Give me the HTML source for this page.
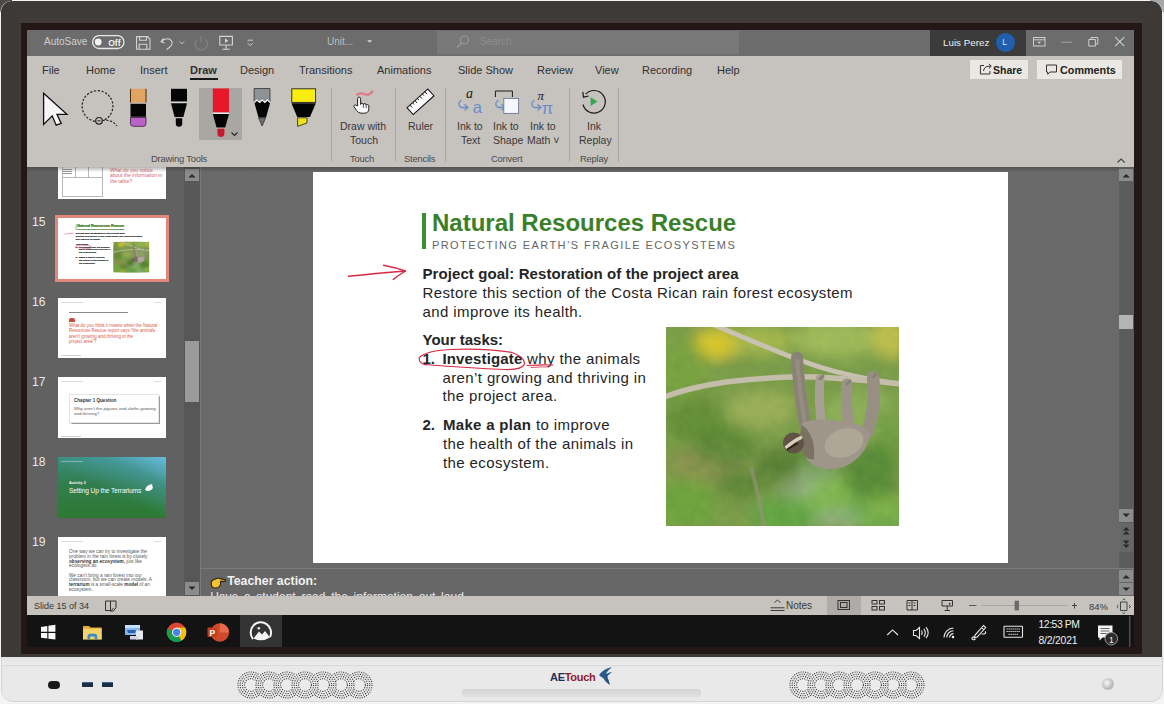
<!DOCTYPE html>
<html><head><meta charset="utf-8">
<style>
*{margin:0;padding:0;box-sizing:border-box}
html,body{width:1164px;height:704px;overflow:hidden;background:#f4f4f4;font-family:"Liberation Sans",sans-serif}
.a{position:absolute}
.t{position:absolute;white-space:nowrap;line-height:1}
.tab{position:absolute;top:65px;font-size:11px;color:#303030;white-space:nowrap;line-height:1}
.rl{position:absolute;font-size:10.5px;color:#383838;white-space:nowrap;line-height:1;text-align:center}
.gl{position:absolute;top:154.3px;font-size:9.4px;letter-spacing:-0.2px;color:#4a4a4a;white-space:nowrap;line-height:1}
.sep{position:absolute;top:88px;width:1px;height:74px;background:#aaa6a2}
.num{position:absolute;left:32px;font-size:12px;color:#e8e8e8;line-height:1}
.sl{position:absolute;left:422.5px;font-size:15px;color:#252525;white-space:nowrap;line-height:1;letter-spacing:0.4px}
.clone .sl{-webkit-text-stroke:1.6px #3a3a3a}.clone .t{-webkit-text-stroke:1.6px #3a8029}
.thumb{position:absolute;left:58px;width:108px;height:61px;background:#fff;overflow:hidden}
</style></head><body>
<!-- outer corners -->
<div class="a" style="left:0;top:0;width:12px;height:12px;background:#4a4a4a"></div>
<div class="a" style="left:1150px;top:0;width:14px;height:12px;background:#a8a8a8"></div>
<!-- bottom frame -->
<div class="a" style="left:1px;top:640px;width:1162px;height:62px;background:#e9e9e9;border-radius:0 0 12px 12px;border:1px solid #d6d6d6"></div>
<!-- bezel -->
<div class="a" style="left:1px;top:1px;width:1161px;height:656px;background:#3d3936;border-radius:11px 11px 0 0;box-shadow:0.5px 0 0 #f0f0f0,-0.5px 0 0 #f0f0f0"></div>
<!-- inner dark -->
<div class="a" style="left:12px;top:7px;width:1140px;height:3px;background:#413a3b;opacity:0.6"></div>
<div class="a" style="left:17px;top:18px;width:1129px;height:5px;background:#413a38;border-radius:3px 3px 0 0"></div>
<div class="a" style="left:21px;top:22.6px;width:1121px;height:631.4px;background:#241817"></div>

<!-- bottom frame details -->
<div class="a" style="left:2px;top:657px;width:1160px;height:9px;background:linear-gradient(#e3e3e3,#ededed)"></div>
<div class="a" style="left:2px;top:665px;width:1160px;height:1px;background:#d8d8d8"></div>
<div class="a" style="left:48px;top:680.8px;width:11.6px;height:7.8px;border-radius:4px;background:#1a1a1a"></div>
<div class="a" style="left:82px;top:681.5px;width:11px;height:5.2px;background:#1a2f44;border-top:1.5px solid #3a6a94"></div>
<div class="a" style="left:102px;top:681.5px;width:11px;height:5.2px;background:#1a2f44;border-top:1.5px solid #3a6a94"></div>
<svg class="a grille" style="left:237px;top:671px" width="138" height="29" viewBox="0 0 138 29"><circle cx="14" cy="14" r="14.0" fill="#ebebeb"/><circle cx="14" cy="14" r="13.0" fill="none" stroke="#383838" stroke-width="1.1" stroke-dasharray="1.1 1.234"/><circle cx="14" cy="14" r="10.8" fill="none" stroke="#383838" stroke-width="1.1" stroke-dasharray="1.1 1.240"/><circle cx="14" cy="14" r="8.6" fill="none" stroke="#383838" stroke-width="1.1" stroke-dasharray="1.1 1.249"/><circle cx="14" cy="14" r="6.4" fill="none" stroke="#383838" stroke-width="1.1" stroke-dasharray="1.1 1.265"/><circle cx="122" cy="14" r="14.0" fill="#ebebeb"/><circle cx="122" cy="14" r="13.0" fill="none" stroke="#383838" stroke-width="1.1" stroke-dasharray="1.1 1.234"/><circle cx="122" cy="14" r="10.8" fill="none" stroke="#383838" stroke-width="1.1" stroke-dasharray="1.1 1.240"/><circle cx="122" cy="14" r="8.6" fill="none" stroke="#383838" stroke-width="1.1" stroke-dasharray="1.1 1.249"/><circle cx="122" cy="14" r="6.4" fill="none" stroke="#383838" stroke-width="1.1" stroke-dasharray="1.1 1.265"/><circle cx="32" cy="14" r="14.0" fill="#ebebeb"/><circle cx="32" cy="14" r="13.0" fill="none" stroke="#383838" stroke-width="1.1" stroke-dasharray="1.1 1.234"/><circle cx="32" cy="14" r="10.8" fill="none" stroke="#383838" stroke-width="1.1" stroke-dasharray="1.1 1.240"/><circle cx="32" cy="14" r="8.6" fill="none" stroke="#383838" stroke-width="1.1" stroke-dasharray="1.1 1.249"/><circle cx="32" cy="14" r="6.4" fill="none" stroke="#383838" stroke-width="1.1" stroke-dasharray="1.1 1.265"/><circle cx="104" cy="14" r="14.0" fill="#ebebeb"/><circle cx="104" cy="14" r="13.0" fill="none" stroke="#383838" stroke-width="1.1" stroke-dasharray="1.1 1.234"/><circle cx="104" cy="14" r="10.8" fill="none" stroke="#383838" stroke-width="1.1" stroke-dasharray="1.1 1.240"/><circle cx="104" cy="14" r="8.6" fill="none" stroke="#383838" stroke-width="1.1" stroke-dasharray="1.1 1.249"/><circle cx="104" cy="14" r="6.4" fill="none" stroke="#383838" stroke-width="1.1" stroke-dasharray="1.1 1.265"/><circle cx="50" cy="14" r="14.0" fill="#ebebeb"/><circle cx="50" cy="14" r="13.0" fill="none" stroke="#383838" stroke-width="1.1" stroke-dasharray="1.1 1.234"/><circle cx="50" cy="14" r="10.8" fill="none" stroke="#383838" stroke-width="1.1" stroke-dasharray="1.1 1.240"/><circle cx="50" cy="14" r="8.6" fill="none" stroke="#383838" stroke-width="1.1" stroke-dasharray="1.1 1.249"/><circle cx="50" cy="14" r="6.4" fill="none" stroke="#383838" stroke-width="1.1" stroke-dasharray="1.1 1.265"/><circle cx="86" cy="14" r="14.0" fill="#ebebeb"/><circle cx="86" cy="14" r="13.0" fill="none" stroke="#383838" stroke-width="1.1" stroke-dasharray="1.1 1.234"/><circle cx="86" cy="14" r="10.8" fill="none" stroke="#383838" stroke-width="1.1" stroke-dasharray="1.1 1.240"/><circle cx="86" cy="14" r="8.6" fill="none" stroke="#383838" stroke-width="1.1" stroke-dasharray="1.1 1.249"/><circle cx="86" cy="14" r="6.4" fill="none" stroke="#383838" stroke-width="1.1" stroke-dasharray="1.1 1.265"/><circle cx="68" cy="14" r="14.0" fill="#ebebeb"/><circle cx="68" cy="14" r="13.0" fill="none" stroke="#383838" stroke-width="1.1" stroke-dasharray="1.1 1.234"/><circle cx="68" cy="14" r="10.8" fill="none" stroke="#383838" stroke-width="1.1" stroke-dasharray="1.1 1.240"/><circle cx="68" cy="14" r="8.6" fill="none" stroke="#383838" stroke-width="1.1" stroke-dasharray="1.1 1.249"/><circle cx="68" cy="14" r="6.4" fill="none" stroke="#383838" stroke-width="1.1" stroke-dasharray="1.1 1.265"/></svg>
<svg class="a grille" style="left:789px;top:671px" width="138" height="29" viewBox="0 0 138 29"><circle cx="14" cy="14" r="14.0" fill="#ebebeb"/><circle cx="14" cy="14" r="13.0" fill="none" stroke="#383838" stroke-width="1.1" stroke-dasharray="1.1 1.234"/><circle cx="14" cy="14" r="10.8" fill="none" stroke="#383838" stroke-width="1.1" stroke-dasharray="1.1 1.240"/><circle cx="14" cy="14" r="8.6" fill="none" stroke="#383838" stroke-width="1.1" stroke-dasharray="1.1 1.249"/><circle cx="14" cy="14" r="6.4" fill="none" stroke="#383838" stroke-width="1.1" stroke-dasharray="1.1 1.265"/><circle cx="122" cy="14" r="14.0" fill="#ebebeb"/><circle cx="122" cy="14" r="13.0" fill="none" stroke="#383838" stroke-width="1.1" stroke-dasharray="1.1 1.234"/><circle cx="122" cy="14" r="10.8" fill="none" stroke="#383838" stroke-width="1.1" stroke-dasharray="1.1 1.240"/><circle cx="122" cy="14" r="8.6" fill="none" stroke="#383838" stroke-width="1.1" stroke-dasharray="1.1 1.249"/><circle cx="122" cy="14" r="6.4" fill="none" stroke="#383838" stroke-width="1.1" stroke-dasharray="1.1 1.265"/><circle cx="32" cy="14" r="14.0" fill="#ebebeb"/><circle cx="32" cy="14" r="13.0" fill="none" stroke="#383838" stroke-width="1.1" stroke-dasharray="1.1 1.234"/><circle cx="32" cy="14" r="10.8" fill="none" stroke="#383838" stroke-width="1.1" stroke-dasharray="1.1 1.240"/><circle cx="32" cy="14" r="8.6" fill="none" stroke="#383838" stroke-width="1.1" stroke-dasharray="1.1 1.249"/><circle cx="32" cy="14" r="6.4" fill="none" stroke="#383838" stroke-width="1.1" stroke-dasharray="1.1 1.265"/><circle cx="104" cy="14" r="14.0" fill="#ebebeb"/><circle cx="104" cy="14" r="13.0" fill="none" stroke="#383838" stroke-width="1.1" stroke-dasharray="1.1 1.234"/><circle cx="104" cy="14" r="10.8" fill="none" stroke="#383838" stroke-width="1.1" stroke-dasharray="1.1 1.240"/><circle cx="104" cy="14" r="8.6" fill="none" stroke="#383838" stroke-width="1.1" stroke-dasharray="1.1 1.249"/><circle cx="104" cy="14" r="6.4" fill="none" stroke="#383838" stroke-width="1.1" stroke-dasharray="1.1 1.265"/><circle cx="50" cy="14" r="14.0" fill="#ebebeb"/><circle cx="50" cy="14" r="13.0" fill="none" stroke="#383838" stroke-width="1.1" stroke-dasharray="1.1 1.234"/><circle cx="50" cy="14" r="10.8" fill="none" stroke="#383838" stroke-width="1.1" stroke-dasharray="1.1 1.240"/><circle cx="50" cy="14" r="8.6" fill="none" stroke="#383838" stroke-width="1.1" stroke-dasharray="1.1 1.249"/><circle cx="50" cy="14" r="6.4" fill="none" stroke="#383838" stroke-width="1.1" stroke-dasharray="1.1 1.265"/><circle cx="86" cy="14" r="14.0" fill="#ebebeb"/><circle cx="86" cy="14" r="13.0" fill="none" stroke="#383838" stroke-width="1.1" stroke-dasharray="1.1 1.234"/><circle cx="86" cy="14" r="10.8" fill="none" stroke="#383838" stroke-width="1.1" stroke-dasharray="1.1 1.240"/><circle cx="86" cy="14" r="8.6" fill="none" stroke="#383838" stroke-width="1.1" stroke-dasharray="1.1 1.249"/><circle cx="86" cy="14" r="6.4" fill="none" stroke="#383838" stroke-width="1.1" stroke-dasharray="1.1 1.265"/><circle cx="68" cy="14" r="14.0" fill="#ebebeb"/><circle cx="68" cy="14" r="13.0" fill="none" stroke="#383838" stroke-width="1.1" stroke-dasharray="1.1 1.234"/><circle cx="68" cy="14" r="10.8" fill="none" stroke="#383838" stroke-width="1.1" stroke-dasharray="1.1 1.240"/><circle cx="68" cy="14" r="8.6" fill="none" stroke="#383838" stroke-width="1.1" stroke-dasharray="1.1 1.249"/><circle cx="68" cy="14" r="6.4" fill="none" stroke="#383838" stroke-width="1.1" stroke-dasharray="1.1 1.265"/></svg>
<div class="t" style="left:550px;top:671.5px;font-size:11px;font-weight:bold;letter-spacing:-0.3px;color:#1f2f60">AE<span style="color:#8c1c2c">Touch</span></div>
<svg class="a" style="left:597px;top:666px" width="18" height="22" viewBox="0 0 18 22"><path d="M2 9 Q6 3 15 1 Q10 5 9 8 Q13 6 15 6 Q11 9 10 11 Q12 15 13 19 Q8 16 6 12 Q4 11 2 9z" fill="#2a5a8c"/><path d="M9 8 Q11 13 12 18" stroke="#1a3a60" stroke-width="0.6" fill="none"/></svg>
<div class="a" style="left:462px;top:689px;width:239px;height:8px;border-radius:3px;background:linear-gradient(#d4d4d4,#e0e0e0)"></div>
<div class="a" style="left:1102px;top:678px;width:12px;height:12px;border-radius:50%;background:radial-gradient(circle at 40% 40%,#fafafa,#b8b8b8 60%,#d8d8d8)"></div>

<!-- SCREEN -->
<div class="a" style="left:27px;top:30px;width:1107px;height:617px;background:#696969"></div>
<!-- title bar -->
<div class="a" style="left:27px;top:30px;width:1107px;height:26px;background:#6b6c6b"></div>
<div class="a" style="left:437px;top:31px;width:302px;height:23px;background:#777877"></div>
<div class="a" style="left:930px;top:30px;width:96px;height:26px;background:#3b3b3b"></div>
<div class="t" style="left:44px;top:37.2px;font-size:10px;color:#cfcfcf">AutoSave</div>
<div class="t" style="left:943px;top:38.3px;font-size:9.8px;color:#eeeeee">Luis Perez</div>
<div class="a" style="left:995.5px;top:32.5px;width:19px;height:19px;border-radius:50%;background:#1f5fae"></div>
<div class="t" style="left:1002.3px;top:38px;font-size:8.5px;color:#dfe8f5">L</div>
<div class="t" style="left:327px;top:37px;font-size:10px;color:#bdbdbd">Unit...</div>
<div class="t" style="left:480px;top:37px;font-size:10px;color:#8d8e8d">Search</div>

<svg class="a" style="left:0;top:0" width="1164" height="60" viewBox="0 0 1164 60">
<g fill="none" stroke="#d4d4d4" stroke-width="1.1">
<rect x="92.6" y="35.6" width="31.4" height="12.9" rx="6.45" stroke="#e8e8e8" stroke-width="1.3"/>
<path d="M136.6 36.6 h11 l2.4 2.4 v10.2 h-13.4 z M139.6 36.6 v3.6 h7 v-3.6 M139.2 49.2 v-5 h7.6 v5" />
<path d="M163.5 38.2 l-2.5 3.6 l3.6 1.2 M161.4 41.7 Q165 38 169 39 Q173.5 41 171.5 45 Q170 47.5 166.5 49.5"/>
<path d="M179.6 41.5 l2.3 2.3 l2.3 -2.3" stroke-width="0.9"/>
<path d="M219.8 36.4 h12.6 v8.6 h-12.6 z M226.1 45 v4 M222.5 49.2 h7.2" />
<path d="M247.4 40.2 h5.6 M247.6 43.2 l2.6 2.4 l2.6 -2.4" stroke-width="0.9"/>

</g>
<path d="M197.2 39.2 A6.2 6.2 0 1 0 205.2 39.2 M201.2 36.2 V42.5" fill="none" stroke="#7f807f" stroke-width="1.4"/>
<path d="M225 38.3 l3.4 2.4 l-3.4 2.4 z" fill="#d4d4d4"/>
<circle cx="98.2" cy="42" r="3.4" fill="#f2f2f2"/>
<path d="M367.2 40.2 h5 l-2.5 2.6 z" fill="#d8d8d8"/>
<text x="108.2" y="45.6" font-family="Liberation Sans" font-size="8.6" font-weight="bold" fill="#f0f0f0">Off</text>
<g fill="none" stroke="#9a9b9a" stroke-width="1.2">
<circle cx="464.5" cy="40" r="4"/>
<path d="M461.5 43 l-4.5 4.5"/>
</g>
<g fill="none" stroke="#cfcfcf" stroke-width="1">
<rect x="1033.5" y="37.5" width="11.5" height="8.5"/>
<path d="M1033.5 39.8 h11.5"/>
<path d="M1061 42.2 h11" stroke="#a5a5a5"/>
<path d="M1088.8 39.5 h6.6 v6.6 h-6.6 z M1091 39.5 v-2 h6.8 v6.6 h-2.4"/>
<path d="M1115.2 37.2 l9 9 M1124.2 37.2 l-9 9" stroke-width="1.1"/>
</g>
<path d="M1037.2 41.8 h4 l-2 2 z" fill="#cfcfcf"/>
</svg>

<!-- ribbon -->
<div class="a" style="left:27px;top:56px;width:1107px;height:111px;background:#c6c2be"></div>
<div class="tab" style="left:42px">File</div>
<div class="tab" style="left:86px">Home</div>
<div class="tab" style="left:140px">Insert</div>
<div class="tab" style="left:190px;font-weight:bold">Draw</div>
<div class="a" style="left:190px;top:78px;width:28px;height:2px;background:#1a1a1a"></div>
<div class="tab" style="left:240px">Design</div>
<div class="tab" style="left:299px">Transitions</div>
<div class="tab" style="left:377px">Animations</div>
<div class="tab" style="left:458px">Slide Show</div>
<div class="tab" style="left:537px">Review</div>
<div class="tab" style="left:595px">View</div>
<div class="tab" style="left:642px">Recording</div>
<div class="tab" style="left:717px">Help</div>

<div class="a" style="left:970px;top:60px;width:58px;height:19px;background:#ebe8e4"></div>
<div class="t" style="left:993px;top:65px;font-size:10.5px;color:#222;font-weight:bold">Share</div>
<div class="a" style="left:1037px;top:60px;width:85px;height:19px;background:#ebe8e4"></div>
<div class="t" style="left:1060px;top:65px;font-size:10.8px;color:#222;font-weight:bold">Comments</div>

<svg class="a" style="left:960px;top:56px" width="180" height="115" viewBox="960 56 180 115">
<g fill="none" stroke="#333" stroke-width="1">
<path d="M984 65.5 h-3.6 v8.5 h9.5 v-3"/>
<path d="M983.5 71 q0.5 -4.5 5.5 -4.8 h1.8 M988.8 63.8 l2.5 2.4 l-2.5 2.4"/>
<path d="M1046.5 65 h10 v7 h-6.5 l-2.3 2.3 v-2.3 h-1.2 z"/>
<path d="M1117.5 162.5 l3.6 -3.4 l3.6 3.4" stroke="#444" stroke-width="1.1"/>
</g>
</svg>
<div class="sep" style="left:331px"></div>
<div class="sep" style="left:395px"></div>
<div class="sep" style="left:445px"></div>
<div class="sep" style="left:569px"></div>
<div class="sep" style="left:618px"></div>
<div class="gl" style="left:151px">Drawing Tools</div>
<div class="gl" style="left:350px">Touch</div>
<div class="gl" style="left:404px">Stencils</div>
<div class="gl" style="left:491px">Convert</div>
<div class="gl" style="left:580px">Replay</div>
<div class="rl" style="left:340px;top:121px">Draw with</div>
<div class="rl" style="left:350px;top:135px">Touch</div>
<div class="rl" style="left:408px;top:121px">Ruler</div>
<div class="rl" style="left:457px;top:121px">Ink to</div>
<div class="rl" style="left:461px;top:135px">Text</div>
<div class="rl" style="left:493px;top:121px">Ink to</div>
<div class="rl" style="left:493px;top:135px">Shape</div>
<div class="rl" style="left:530px;top:121px">Ink to</div>
<div class="rl" style="left:527px;top:135px">Math ˅</div>
<div class="rl" style="left:587px;top:121px">Ink</div>
<div class="rl" style="left:579px;top:135px">Replay</div>
<div class="a" style="left:199px;top:88px;width:43px;height:52px;background:#a9a7a4"></div>

<svg class="a" style="left:0;top:0" width="1164" height="170" viewBox="0 0 1164 170">
<!-- arrow -->
<path d="M43.6 93.3 L43.6 124.5 L52.2 115.8 L56.2 125.2 L61.2 123.4 L57 114.3 L66.9 114.3 Z" fill="#f6f6f6" stroke="#111" stroke-width="1.3" stroke-linejoin="miter"/>
<!-- lasso -->
<g fill="none" stroke="#222" stroke-width="1.2">
<path d="M95 121.3 A15.4 15.4 0 1 1 103 120.5" stroke-dasharray="2.2 1.6"/>
<circle cx="99" cy="120.8" r="3.3"/>
<path d="M97.5 120.8 h3" stroke-width="1"/>
<path d="M102.5 120.5 Q112 119 117 126" stroke-dasharray="2.2 1.6"/>
</g>
<!-- eraser -->
<rect x="130.5" y="88.8" width="15.5" height="13.8" fill="#e0a560"/>
<path d="M130.5 88.8 v13.8 M146 88.8 v13.8" stroke="#4a2a10" stroke-width="1"/>
<rect x="130.5" y="103.8" width="15.5" height="13" fill="#050505"/>
<path d="M130.5 117.5 h15.5 v6 a2.8 2.8 0 0 1 -2.8 2.8 h-9.9 a2.8 2.8 0 0 1 -2.8 -2.8 z" fill="#bb62c8" stroke="#3a1a40" stroke-width="0.8"/>
<!-- black pen -->
<rect x="171" y="88.8" width="16" height="12.8" fill="#050505"/>
<rect x="171" y="101.7" width="16" height="1.4" fill="#d8d8d8"/>
<path d="M171 103.2 h16 l-3.6 13.8 h-8.8 z" fill="#050505"/>
<path d="M175.8 118.2 h6.4 v5.6 a3.2 3 0 0 1 -6.4 0 z" fill="#050505"/>
<!-- red pen selected -->
<rect x="212.8" y="88.5" width="16.2" height="24" fill="#e8182a"/>
<rect x="212.8" y="112.6" width="16.2" height="1.3" fill="#f4f4f4"/>
<rect x="217" y="127.7" width="7.8" height="0.9" fill="#e8e8e8"/>
<path d="M212.8 114 h16.2 l-3.8 13.6 h-8.6 z" fill="#050505"/>
<path d="M217.4 128.6 h7 v4.8 a3.5 3.4 0 0 1 -7 0 z" fill="#c8182e"/>
<path d="M231.5 132.5 l3 3 l3 -3" fill="none" stroke="#222" stroke-width="1.1"/>
<!-- pencil -->
<path d="M254.1 88.5 h15.9 v13.4 l-2.6 -2.4 l-2.6 2.4 l-2.6 -2.4 l-2.6 2.4 l-2.6 -2.4 l-2.9 2.4 z" fill="#8c9296" stroke="#222" stroke-width="0.7"/>
<path d="M254.5 103.2 l2.6 -2.4 l2.6 2.4 l2.6 -2.4 l2.6 2.4 l2.6 -2.4 l2.5 2.4 l-4 14.2 h-7.5 z" fill="#050505"/>
<path d="M258.5 117.8 h7.2 l-3.6 8.2 z" fill="#6c7074" stroke="#111" stroke-width="0.6"/>
<path d="M254.3 102.2 l2.6 -2.4 l2.6 2.4 l2.6 -2.4 l2.6 2.4 l2.6 -2.4 l2.7 2.4" fill="none" stroke="#f6f6f6" stroke-width="1.1"/>
<!-- highlighter -->
<rect x="291.8" y="88.8" width="23.8" height="13.6" fill="#f8ec10" stroke="#222" stroke-width="0.9"/>
<path d="M291.5 103.2 h24.3 l-5.8 13.8 h-12.8 z" fill="#050505"/>
<path d="M297.6 117.8 h9.4 v5.2 l-9.4 3.4 z" fill="#f0e21a" stroke="#222" stroke-width="0.8"/>
<!-- hand -->
<path d="M357 94.8 Q361 92.5 364.5 94.2 Q369 96 372.5 91.5" fill="none" stroke="#e07a88" stroke-width="2.2" stroke-linecap="round"/>
<path d="M357.6 106 V98.6 a1.5 1.5 0 0 1 3 0 V104.5 a1.4 1.4 0 0 1 2.8 0.3 a1.4 1.4 0 0 1 2.8 0.4 a1.4 1.4 0 0 1 2.6 0.6 V109 q0 4 -4.5 4.2 h-3.3 q-2.6 0 -4.3 -2.6 l-2.6 -3.8 a1.3 1.3 0 0 1 2 -1.6 z" fill="#fafafa" stroke="#222" stroke-width="1"/>
<path d="M363.4 104.8 v3 M366.2 105.2 v3" stroke="#222" stroke-width="0.8"/>
<!-- ruler -->
<g transform="translate(420.5 101.8) rotate(-42)">
<rect x="-14" y="-4.6" width="28" height="9.2" fill="#fafafa" stroke="#1a1a1a" stroke-width="1.1"/>
<path d="M-10 -4.6 v3.2 M-6.6 -4.6 v2.2 M-3.3 -4.6 v3.2 M0 -4.6 v2.2 M3.3 -4.6 v3.2 M6.6 -4.6 v2.2 M10 -4.6 v3.2" stroke="#1a1a1a" stroke-width="0.9"/>
</g>
<!-- ink to text -->
<text x="466" y="98" font-family="Liberation Serif" font-style="italic" font-size="14" fill="#1a1a1a">a</text>
<g fill="none" stroke="#6a8cc8" stroke-width="1.3" stroke-linecap="round">
<path d="M461 100.5 Q456.5 104 461 107.5 L468 107.5 M465 104.8 L468 107.5 L465 110"/>
<path d="M498 100.5 Q493.5 104 498 107.5 L505 107.5 M502 104.8 L505 107.5 L502 110"/>
<path d="M534 100.5 Q529.5 104 534 107.5 L541 107.5 M538 104.8 L541 107.5 L538 110"/>
</g>
<text x="472.8" y="113" font-family="Liberation Sans" font-size="16.5" fill="#6a8cc8">a</text>
<!-- ink to shape -->
<path d="M495.4 97 V91 H512.4 V97" fill="none" stroke="#1a1a1a" stroke-width="1"/>
<rect x="503.8" y="98.4" width="14.8" height="15" fill="#f4f7fc" stroke="#6b7a96" stroke-width="0.9"/>
<!-- ink to math -->
<text x="537.5" y="99.5" font-family="Liberation Serif" font-style="italic" font-size="13" fill="#1a1a1a">&#960;</text>
<text x="541.5" y="113.5" font-family="Liberation Sans" font-size="17" fill="#6a8cc8">&#960;</text>
<!-- replay -->
<path d="M585.6 94.2 A11.3 11.3 0 1 1 583 104.5" fill="none" stroke="#1a1a1a" stroke-width="1.2"/>
<path d="M582.8 91.8 L583.5 97.2 L588.6 96" fill="none" stroke="#1a1a1a" stroke-width="1.2"/>
<path d="M590.6 97.2 L597.4 101.6 L590.6 106 Z" fill="#2fa84e"/>
</svg>

<!-- left panel -->
<div class="a" style="left:27px;top:167px;width:157px;height:429px;background:#616161"></div>
<div class="a" style="left:184px;top:167px;width:16px;height:429px;background:#575757"></div>
<div class="a" style="left:185px;top:169px;width:14px;height:12px;background:#8c8c8c"></div>
<div class="a" style="left:185px;top:341px;width:14px;height:61px;background:#9a9a9a"></div>
<div class="a" style="left:185px;top:582px;width:14px;height:13px;background:#8c8c8c"></div>
<div class="a" style="left:200px;top:167px;width:1px;height:429px;background:#7a7a7a"></div>

<div class="num" style="top:216px">15</div>
<div class="a" style="left:55px;top:215px;width:114px;height:67px;border:3px solid #e0867a;background:#fff"></div>
<div class="num" style="top:296px">16</div>
<div class="num" style="top:376px">17</div>
<div class="num" style="top:456px">18</div>
<div class="num" style="top:536px">19</div>
<!-- thumbnails -->
<div class="thumb" style="top:167px;height:32px">
  <div class="a" style="left:3.5px;top:0;width:41px;height:30px;border:0.5px solid #b8b8b8;border-top:none"></div>
  <div class="a" style="left:3.5px;top:10px;width:41px;height:0.5px;background:#b8b8b8"></div>
  <div class="a" style="left:16.5px;top:0;width:0.5px;height:10px;background:#b8b8b8"></div>
  <div class="a" style="left:29.5px;top:0;width:0.5px;height:10px;background:#b8b8b8"></div>
  <div class="a" style="left:5px;top:2px;width:9px;height:5px;background:repeating-linear-gradient(#999 0 0.6px,transparent 0.6px 2px)"></div>
  <div class="t" style="left:52px;top:1px;font-size:5px;line-height:5.3px;color:#e06474">What do you notice<br>about the information in<br>the table?</div>
</div>
<div class="a" style="left:59px;top:218px;width:107px;height:61px;overflow:hidden;background:#fff">
  <div class="a clone" style="left:0;top:0;width:1164px;height:704px;transform-origin:0 0;transform:scale(0.15396) translate(-313px,-172px)">
  <!-- slide content -->
<div class="a" style="left:422px;top:213px;width:4px;height:36px;background:#3e8f2f"></div>
<div class="t" style="left:432px;top:211px;font-size:24px;font-weight:bold;color:#3a8029">Natural Resources Rescue</div>
<div class="t" style="left:432px;top:239.5px;font-size:11px;letter-spacing:1.42px;color:#656565">PROTECTING EARTH&#8217;S FRAGILE ECOSYSTEMS</div>
<div class="sl" style="top:266.3px;font-weight:bold;letter-spacing:0.08px">Project goal: Restoration of the project area</div>
<div class="sl" style="top:285.3px">Restore this section of the Costa Rican rain forest ecosystem</div>
<div class="sl" style="top:304.3px">and improve its health.</div>
<div class="sl" style="top:332.3px;font-weight:bold;letter-spacing:0">Your tasks:</div>
<div class="sl" style="top:351px;letter-spacing:0"><b>1.</b></div>
<div class="sl" style="left:442.4px;top:351px"><b style="letter-spacing:0.15px">Investigate</b> why the animals</div>
<div class="sl" style="left:442.4px;top:369.7px">aren&#8217;t growing and thriving in</div>
<div class="sl" style="left:442.4px;top:388.2px">the project area.</div>
<div class="sl" style="top:417px;letter-spacing:0"><b>2.</b></div>
<div class="sl" style="left:443px;top:417px"><b style="letter-spacing:0.3px">Make a plan</b> to improve</div>
<div class="sl" style="left:443px;top:436px">the health of the animals in</div>
<div class="sl" style="left:443px;top:455.3px">the ecosystem.</div>
<svg class="a"  style="left:666px;top:327px" width="233" height="199" viewBox="0 0 233 199">
<defs>
<filter id="bl_t" x="-50%" y="-50%" width="200%" height="200%"><feGaussianBlur stdDeviation="7"/></filter>
<filter id="bl2_t" x="-20%" y="-20%" width="140%" height="140%"><feGaussianBlur stdDeviation="0.7"/></filter>
<clipPath id="pc_t"><rect width="233" height="199"/></clipPath>
</defs>
<g clip-path="url(#pc_t)">
<rect width="233" height="199" fill="#7a9a4a"/>
<g filter="url(#bl_t)">
<ellipse cx="116" cy="100" rx="140" ry="120" fill="#7c9a48" opacity="1"/>
<ellipse cx="50" cy="17" rx="22" ry="14" fill="#d6c228" opacity="0.9"/>
<ellipse cx="15" cy="40" rx="25" ry="30" fill="#6f9a3c" opacity="0.8"/>
<ellipse cx="95" cy="12" rx="30" ry="12" fill="#a8b84a" opacity="0.8"/>
<ellipse cx="180" cy="15" rx="40" ry="18" fill="#9ab858" opacity="0.8"/>
<ellipse cx="225" cy="12" rx="15" ry="20" fill="#c4c048" opacity="0.7"/>
<ellipse cx="30" cy="90" rx="30" ry="25" fill="#5f8a34" opacity="0.8"/>
<ellipse cx="90" cy="80" rx="35" ry="18" fill="#9aae58" opacity="0.7"/>
<ellipse cx="190" cy="85" rx="40" ry="25" fill="#88aa58" opacity="0.7"/>
<ellipse cx="220" cy="100" rx="20" ry="30" fill="#6a9840" opacity="0.7"/>
<ellipse cx="40" cy="140" rx="40" ry="20" fill="#8a8c50" opacity="0.6"/>
<ellipse cx="20" cy="175" rx="30" ry="25" fill="#74a83c" opacity="0.8"/>
<ellipse cx="70" cy="160" rx="25" ry="15" fill="#4f7a30" opacity="0.6"/>
<ellipse cx="110" cy="135" rx="25" ry="20" fill="#3f6a28" opacity="0.6"/>
<ellipse cx="120" cy="185" rx="35" ry="18" fill="#5aa040" opacity="0.7"/>
<ellipse cx="160" cy="165" rx="30" ry="18" fill="#7ab850" opacity="0.7"/>
<ellipse cx="200" cy="150" rx="30" ry="30" fill="#3f7a2c" opacity="0.6"/>
<ellipse cx="210" cy="185" rx="35" ry="18" fill="#6aa84c" opacity="0.7"/>
<ellipse cx="170" cy="190" rx="25" ry="10" fill="#9ab0a0" opacity="0.5"/>
<ellipse cx="130" cy="160" rx="18" ry="10" fill="#98a8a8" opacity="0.45"/>
<ellipse cx="60" cy="190" rx="20" ry="8" fill="#b8c040" opacity="0.6"/>
<ellipse cx="215" cy="178" rx="15" ry="12" fill="#c8c830" opacity="0.5"/>
<ellipse cx="150" cy="145" rx="20" ry="10" fill="#8cb0a0" opacity="0.4"/>
</g>
<path d="M85 140 Q92 165 98 199" stroke="#9a9480" stroke-width="4" fill="none" opacity="0.55" filter="url(#bl2_t)"/>
<g filter="url(#bl2_t)">
<path d="M46 -3 Q90 16 128 31 Q160 43 180 47 Q205 53 235 57" stroke="#c9c2b2" stroke-width="4.8" fill="none"/>
<path d="M-2 70 Q25 60 60 55 Q110 49 150 50 Q200 53 235 57" stroke="#c4bdaa" stroke-width="5.5" fill="none"/>
<path d="M131 31 Q134 65 138 98" stroke="#8d857a" stroke-width="11.5" fill="none" stroke-linecap="round"/>
<path d="M154 52 Q152 75 155 100" stroke="#a49c8e" stroke-width="9" fill="none" stroke-linecap="round"/>
<path d="M181 57 Q180 80 184 100" stroke="#9a9284" stroke-width="11" fill="none" stroke-linecap="round"/>
<path d="M207 50 Q210 78 202 104" stroke="#958d80" stroke-width="12" fill="none" stroke-linecap="round"/>
<ellipse cx="170" cy="117" rx="36" ry="23" fill="#9c9486" transform="rotate(-18 170 117)"/>
<ellipse cx="178" cy="114" rx="22" ry="15" fill="#b0a898" transform="rotate(-18 178 114)"/>
<ellipse cx="146" cy="113" rx="12" ry="19" fill="#7a7062"/>
<circle cx="127.5" cy="116" r="10.5" fill="#5e5244"/>
<path d="M119.5 121 Q127 114 136 110" stroke="#d8d0bc" stroke-width="3.2" fill="none"/>
<path d="M121 122.5 Q127 119 132 116" stroke="#2a2018" stroke-width="1.6" fill="none"/>
</g>
</g>
</svg>


            <svg class="a" style="left:0;top:0" width="1164" height="704" viewBox="0 0 1164 704"><g fill="none" stroke="#d42a45" stroke-width="3"><path d="M348.5 276.3 Q375 273.5 405.5 271"/><path d="M425 364.5 Q470 368 505 369.5 Q522 370 524.5 364 Q525 357 512 352.5 Q485 348 450 349.5 Q425 351 419.5 357.5 Q418 363 426 365"/></g></svg>
  </div>
</div>
<div class="thumb" style="top:298px;height:60px">
  <div class="a" style="left:3px;top:3.5px;width:22px;height:0.7px;background:#dcdcdc"></div>
  <div class="a" style="left:96px;top:3.5px;width:7px;height:0.7px;background:#dcdcdc"></div>
  <div class="a" style="left:11px;top:13.5px;width:59px;height:1.2px;background:#8a8a8a"></div>
  <div class="a" style="left:11px;top:19.5px;width:6px;height:4px;background:#c84a3a;border-radius:2px 2px 0 0"></div>
  <div class="t" style="left:11px;top:25px;font-size:4.45px;line-height:5.4px;color:#de5a48">What do you think it means when the Natural<br>Resources Rescue report says "the animals<br>aren't growing and thriving in the<br>project area"?</div>
  <div class="a" style="left:3px;top:57px;width:20px;height:0.6px;background:#d0d0d0"></div>
</div>
<div class="thumb" style="top:377px">
  <div class="a" style="left:3px;top:3.5px;width:22px;height:0.7px;background:#dcdcdc"></div>
  <div class="a" style="left:96px;top:3.5px;width:7px;height:0.7px;background:#dcdcdc"></div>
  <div class="a" style="left:11px;top:17px;width:90px;height:29px;background:#fff;box-shadow:0.6px 0.8px 1px #9a9a9a;border:0.5px solid #e4e4e4"></div>
  <div class="t" style="left:16px;top:22px;font-size:4.6px;font-weight:bold;color:#333">Chapter 1 Question</div>
  <div class="t" style="left:16px;top:29px;font-size:4.4px;line-height:5px;color:#555">Why aren't the jaguars and sloths growing<br>and thriving?</div>
  <div class="a" style="left:3px;top:59px;width:20px;height:0.6px;background:#d0d0d0"></div>
</div>
<div class="thumb" style="top:457px;height:61px;background:linear-gradient(180deg,#3a8c78 0%,#327d4e 45%,#2c7a30 100%)">
  <div class="a" style="left:0;top:0;width:108px;height:61px;background:linear-gradient(205deg,rgba(105,190,225,0.95) 0%,rgba(80,165,190,0.5) 25%,rgba(60,140,120,0) 55%)"></div>
  <div class="a" style="left:3px;top:3.5px;width:22px;height:0.7px;background:rgba(255,255,255,0.35)"></div>
  <div class="t" style="left:11px;top:25px;font-size:3.8px;font-weight:bold;color:#f4f4f4">Activity 2</div>
  <div class="t" style="left:11px;top:30.5px;font-size:6.6px;color:#fafafa;letter-spacing:-0.1px">Setting Up the Terrariums</div>
  <svg class="a" style="left:86px;top:26px" width="10" height="10" viewBox="0 0 10 10"><path d="M1 7 Q2 3 5 2 L8 1 Q9 2 8 3 L9 4 Q9 6 7 7 Q4 9 1 7z" fill="#f8f8f8"/></svg>
</div>
<div class="thumb" style="top:537px;height:59px">
  <div class="a" style="left:3px;top:3.5px;width:22px;height:0.7px;background:#dcdcdc"></div>
  <div class="a" style="left:96px;top:3.5px;width:7px;height:0.7px;background:#dcdcdc"></div>
  <div class="t" style="left:11px;top:13px;font-size:4.7px;line-height:4.75px;color:#555">One way we can try to investigate the<br>problem in the rain forest is by closely<br><b style="color:#333">observing an ecosystem,</b> just like<br>ecologists do.</div>
  <div class="t" style="left:11px;top:36.5px;font-size:4.7px;line-height:4.75px;color:#555">We can't bring a rain forest into our<br>classroom, but we can create models. A<br><b style="color:#333">terrarium</b> is a small-scale <b style="color:#333">model</b> of an<br>ecosystem.</div>
</div>
<!-- editor -->
<div class="a" style="left:27px;top:167px;width:1107px;height:5px;background:linear-gradient(rgba(40,40,40,0.35),rgba(40,40,40,0))"></div>
<div class="a" style="left:313px;top:172px;width:695px;height:391px;background:#fff"></div>
<!-- slide content -->
<div class="a" style="left:422px;top:213px;width:4px;height:36px;background:#3e8f2f"></div>
<div class="t" style="left:432px;top:211px;font-size:24px;font-weight:bold;color:#3a8029">Natural Resources Rescue</div>
<div class="t" style="left:432px;top:239.5px;font-size:11px;letter-spacing:1.42px;color:#656565">PROTECTING EARTH&#8217;S FRAGILE ECOSYSTEMS</div>
<div class="sl" style="top:266.3px;font-weight:bold;letter-spacing:0.08px">Project goal: Restoration of the project area</div>
<div class="sl" style="top:285.3px">Restore this section of the Costa Rican rain forest ecosystem</div>
<div class="sl" style="top:304.3px">and improve its health.</div>
<div class="sl" style="top:332.3px;font-weight:bold;letter-spacing:0">Your tasks:</div>
<div class="sl" style="top:351px;letter-spacing:0"><b>1.</b></div>
<div class="sl" style="left:442.4px;top:351px"><b style="letter-spacing:0.15px">Investigate</b> why the animals</div>
<div class="sl" style="left:442.4px;top:369.7px">aren&#8217;t growing and thriving in</div>
<div class="sl" style="left:442.4px;top:388.2px">the project area.</div>
<div class="sl" style="top:417px;letter-spacing:0"><b>2.</b></div>
<div class="sl" style="left:443px;top:417px"><b style="letter-spacing:0.3px">Make a plan</b> to improve</div>
<div class="sl" style="left:443px;top:436px">the health of the animals in</div>
<div class="sl" style="left:443px;top:455.3px">the ecosystem.</div>
<svg class="a" id="photo" style="left:666px;top:327px" width="233" height="199" viewBox="0 0 233 199">
<defs>
<filter id="bl" x="-50%" y="-50%" width="200%" height="200%"><feGaussianBlur stdDeviation="7"/></filter>
<filter id="bl2" x="-20%" y="-20%" width="140%" height="140%"><feGaussianBlur stdDeviation="0.7"/></filter>
<clipPath id="pc"><rect width="233" height="199"/></clipPath>
<filter id="nz" x="0" y="0" width="100%" height="100%"><feTurbulence type="fractalNoise" baseFrequency="0.09" numOctaves="2" seed="3"/><feColorMatrix type="matrix" values="0 0 0 0 0.5  0 0 0 0 0.6  0 0 0 0 0.3  0 0 0 1.6 -0.55"/></filter>
</defs>
<g clip-path="url(#pc)">
<rect width="233" height="199" fill="#7a9a4a"/>
<g filter="url(#bl)">
<ellipse cx="116" cy="100" rx="140" ry="120" fill="#789a48" opacity="1"/>
<ellipse cx="50" cy="17" rx="24" ry="15" fill="#dcc62a" opacity="0.95"/>
<ellipse cx="15" cy="40" rx="25" ry="30" fill="#76a040" opacity="0.8"/>
<ellipse cx="95" cy="14" rx="30" ry="14" fill="#aabb4c" opacity="0.85"/>
<ellipse cx="170" cy="12" rx="45" ry="18" fill="#a2bc5c" opacity="0.85"/>
<ellipse cx="225" cy="10" rx="18" ry="22" fill="#cfc54a" opacity="0.75"/>
<ellipse cx="30" cy="95" rx="30" ry="25" fill="#5e8834" opacity="0.8"/>
<ellipse cx="95" cy="82" rx="35" ry="18" fill="#a4b45c" opacity="0.7"/>
<ellipse cx="195" cy="88" rx="40" ry="25" fill="#90b05c" opacity="0.75"/>
<ellipse cx="222" cy="110" rx="18" ry="30" fill="#6a9840" opacity="0.7"/>
<ellipse cx="40" cy="138" rx="40" ry="18" fill="#8e8c52" opacity="0.65"/>
<ellipse cx="20" cy="178" rx="30" ry="25" fill="#6aa23c" opacity="0.85"/>
<ellipse cx="60" cy="120" rx="30" ry="20" fill="#4f7e30" opacity="0.6"/>
<ellipse cx="150" cy="125" rx="30" ry="15" fill="#5a8a38" opacity="0.6"/>
<ellipse cx="75" cy="158" rx="25" ry="15" fill="#4f7a30" opacity="0.6"/>
<ellipse cx="112" cy="138" rx="22" ry="18" fill="#3f6a28" opacity="0.55"/>
<ellipse cx="120" cy="188" rx="35" ry="18" fill="#5aa440" opacity="0.75"/>
<ellipse cx="162" cy="168" rx="30" ry="18" fill="#80bc52" opacity="0.75"/>
<ellipse cx="205" cy="148" rx="28" ry="30" fill="#427e2e" opacity="0.6"/>
<ellipse cx="210" cy="188" rx="35" ry="18" fill="#6eac4c" opacity="0.75"/>
<ellipse cx="170" cy="192" rx="25" ry="10" fill="#a0b8a8" opacity="0.5"/>
<ellipse cx="132" cy="162" rx="18" ry="10" fill="#a0b0b0" opacity="0.45"/>
<ellipse cx="218" cy="178" rx="15" ry="12" fill="#8ab848" opacity="0.5"/>
<ellipse cx="150" cy="146" rx="20" ry="10" fill="#94b4a4" opacity="0.4"/>
</g>
<rect width="233" height="199" filter="url(#nz)" opacity="0.35" style="mix-blend-mode:soft-light"/>
<path d="M85 140 Q92 165 98 199" stroke="#9a9480" stroke-width="4" fill="none" opacity="0.55" filter="url(#bl2)"/>
<g filter="url(#bl2)">
<path d="M46 -3 Q90 16 128 31 Q160 43 180 47 Q205 53 235 57" stroke="#c9c2b2" stroke-width="4.8" fill="none"/>
<path d="M-2 70 Q25 60 60 55 Q110 49 150 50 Q200 53 235 57" stroke="#c4bdaa" stroke-width="5.5" fill="none"/>
<path d="M131 31 Q133 62 139 97" stroke="#8a8276" stroke-width="12" fill="none" stroke-linecap="round"/>
<path d="M131 31 Q133 62 139 97" stroke="#a09888" stroke-width="4" fill="none" stroke-linecap="round" opacity="0.5"/>
<path d="M154 52 Q152 75 156 100" stroke="#a8a092" stroke-width="9" fill="none" stroke-linecap="round"/>
<path d="M181 57 Q179 80 184 102" stroke="#9c9486" stroke-width="11" fill="none" stroke-linecap="round"/>
<path d="M207 50 Q211 78 201 106" stroke="#978f82" stroke-width="12.5" fill="none" stroke-linecap="round"/>
<path d="M136 96 Q150 90 175 94 Q200 96 204 108 Q200 130 178 140 Q155 146 142 134 Q132 118 136 96 Z" fill="#9e9688"/>
<ellipse cx="178" cy="116" rx="20" ry="14" fill="#b2aa9a" transform="rotate(-20 178 116)" opacity="0.8"/>
<path d="M136 98 Q150 108 148 132 Q140 134 136 124 Q132 110 136 98Z" fill="#7c7264"/>
<circle cx="127.5" cy="116" r="10.5" fill="#5e5244"/>
<path d="M119.5 121 Q127 114 136 110" stroke="#d8d0bc" stroke-width="3.2" fill="none"/>
<path d="M121 122.5 Q127 119 132 116" stroke="#2a2018" stroke-width="1.6" fill="none"/>
<path d="M131 31 l4 -3 M154 52 l3 -3 M181 57 l3 -3 M207 50 l3 -3" stroke="#8a8276" stroke-width="3" stroke-linecap="round"/>
</g>
</g>
</svg>

<svg class="a" style="left:0;top:0" width="1164" height="704" viewBox="0 0 1164 704">
<g fill="none" stroke="#d42a45" stroke-linecap="round" stroke-linejoin="round">
<path d="M348.5 276.3 Q375 273.5 405.5 271" stroke-width="1.4"/>
<path d="M383.6 265.3 Q395 267.5 405.5 271 Q399 275 393.3 279.4" stroke-width="1.4"/>
<path d="M425 364.5 Q470 368 505 369.5 Q522 370 524.5 364 Q525 357 512 352.5 Q485 348 450 349.5 Q425 351 419.5 357.5 Q418 363 426 365" stroke-width="1.2"/>
<path d="M527 365.5 Q540 364.5 553 365" stroke-width="1.1"/>
<path d="M531 367.5 Q542 366.5 549 367" stroke-width="0.8"/>
</g>
</svg>
<div class="a" style="left:1119px;top:167px;width:15px;height:401px;background:#5c5c5c"></div>
<div class="a" style="left:1119px;top:169px;width:14px;height:12px;background:#8c8c8c"></div>
<div class="a" style="left:1119px;top:315px;width:14px;height:14px;background:#b4b4b4"></div>
<div class="a" style="left:1119px;top:509px;width:14px;height:13px;background:#8c8c8c"></div>
<!-- notes -->
<div class="a" style="left:201px;top:568px;width:933px;height:1px;background:#7c7c7c"></div>
<div class="a" style="left:201px;top:569px;width:933px;height:27px;background:#676767;overflow:hidden">
  <div class="t" style="left:26.2px;top:6px;font-size:12.3px;color:#f2f2f2;font-weight:bold">Teacher action:</div>
  <div class="t" style="left:9.2px;top:21.5px;font-size:12px;color:#e8e8e8;letter-spacing:0px;word-spacing:2.4px">Have a student read the information out loud.</div>
</div>
<div class="a" style="left:1119px;top:570px;width:14px;height:12px;background:#8c8c8c"></div>
<div class="a" style="left:1119px;top:583px;width:14px;height:12px;background:#8c8c8c"></div>

<!-- status bar -->
<div class="a" style="left:27px;top:596px;width:1107px;height:19px;background:#c6c2be"></div>
<div class="t" style="left:34px;top:602px;font-size:9px;color:#3a3a3a">Slide 15 of 34</div>
<div class="t" style="left:786px;top:601px;font-size:10px;color:#3a3a3a">Notes</div>
<div class="a" style="left:827px;top:596px;width:34px;height:19px;background:#aeaba8"></div>
<div class="t" style="left:1089px;top:602px;font-size:9.5px;color:#3a3a3a">84%</div>

<svg class="a" style="left:0;top:160px" width="1164" height="460" viewBox="0 160 1164 460">
<!-- scroll arrows -->
<g fill="#2a2a2a">
<path d="M188.3 177.6 l3.7 -3.6 l3.7 3.6 z"/>
<path d="M188.3 586.4 l3.7 3.6 l3.7 -3.6 z"/>
<path d="M1122.5 177.6 l3.7 -3.6 l3.7 3.6 z"/>
<path d="M1122.5 513.6 l3.7 3.6 l3.7 -3.6 z"/>
<path d="M1122.5 578.6 l3.7 -3.6 l3.7 3.6 z"/>
<path d="M1122.5 587.4 l3.7 3.6 l3.7 -3.6 z"/>
</g>
<rect x="1119" y="523" width="14" height="29" fill="#676767"/>
<g fill="#2a2a2a">
<path d="M1122.8 530.5 l3.4 -3.4 l3.4 3.4 z M1122.8 534.5 l3.4 -3.4 l3.4 3.4 z"/>
<path d="M1122.8 540.5 l3.4 3.4 l3.4 -3.4 z M1122.8 544.5 l3.4 3.4 l3.4 -3.4 z"/>
</g>
<!-- notes hand -->
<path d="M211.2 584 Q211 580.5 214 579.5 L217.5 578.2 Q219 577.6 220 578.6 L225 579.8 Q226.2 580.6 225 581.4 L220.5 581.4 Q221.2 584.5 219.5 586.5 Q218 588.2 214.5 588 Q211.5 587.6 211.2 584 Z" fill="#f3c332" stroke="#2a2000" stroke-width="1.1" stroke-linejoin="round"/>
<!-- status bar icons -->
<g fill="none" stroke="#333" stroke-width="1">
<path d="M105.5 601 h5 v9.5 h-5 z M110.5 601 h5.5 v6.5 l-2.5 3.5 h-3"/>
<path d="M110.5 611.5 l3 -3.5"/>
<path d="M770.5 607.8 h14 M770.5 610.5 h14 M774.5 602.5 l3 -2.4 l3 2.4" stroke="#3a3a3a"/>
<rect x="838" y="600.5" width="11.5" height="9"/>
<rect x="840.5" y="602.5" width="6.5" height="5"/>
<rect x="872" y="600.5" width="5" height="3.5"/><rect x="879.5" y="600.5" width="5" height="3.5"/>
<rect x="872" y="606.5" width="5" height="3.5"/><rect x="879.5" y="606.5" width="5" height="3.5"/>
<path d="M907 600.5 h5 v9.5 h-5 z M912 600.5 h5.5 v9.5 h-5.5 M908.5 603 h2 M908.5 605.5 h2 M913.5 603 h2 M913.5 605.5 h2" />
<path d="M942 600.5 h10.5 v5.5 h-10.5 z M947.2 606 v4 M944.5 610.5 h5.5"/>
<path d="M969 605.5 h7.4" stroke="#555"/>
<path d="M981 605.5 h86.6" stroke="#a9a6a3"/>
<path d="M1072 605.5 h5 M1074.5 603 v5.5" stroke="#444"/>
<path d="M1120.5 602 h6.5 v8.5 h-6.5 z M1118.5 605 l-1.6 1.5 l1.6 1.5 M1129 605 l1.6 1.5 l-1.6 1.5 M1122.5 600 l1.3 -1.2 l1.3 1.2 M1122.5 612.5 l1.3 1.2 l1.3 -1.2" stroke="#444"/>
</g>
<path d="M949 602.5 l2 1.3 l-2 1.3 z" fill="#333"/>
<rect x="1014.6" y="600.7" width="4.4" height="9.7" fill="#6d6b69"/>
</svg>

<!-- taskbar -->
<div class="a" style="left:27px;top:615px;width:1107px;height:32px;background:#131313"></div>
<div class="a" style="left:240px;top:615px;width:42px;height:32px;background:#333333"></div>
<svg class="a" style="left:0;top:612px" width="1164" height="40" viewBox="0 612 1164 40">
<!-- windows -->
<path d="M41 627 L47.3 626 V631.8 H41 Z M48.4 625.8 L55.4 624.8 V631.8 H48.4 Z M41 632.9 H47.3 V638.6 L41 637.7 Z M48.4 632.9 H55.4 V639.6 L48.4 638.8 Z" fill="#fafafa"/>
<!-- folder -->
<path d="M83 626 h6 l1.6 1.6 h11 v2 H83 z" fill="#e4a92a"/>
<rect x="83" y="628.6" width="18.8" height="11" fill="#f6d36a"/>
<path d="M87.5 639.6 v-3.2 q0 -2.6 2.6 -2.6 h4.6 q2.6 0 2.6 2.6 v3.2 h-2.6 v-2.2 q0 -0.8 -0.8 -0.8 h-3 q-0.8 0 -0.8 0.8 v2.2 z" fill="#3b8cc6"/>
<!-- pc -->
<rect x="125" y="625" width="15" height="10" rx="1" fill="#86b8f0"/>
<rect x="125" y="625" width="15" height="3" fill="#c8e0ff"/>
<path d="M127 630 h9 l-1 3 h-7z" fill="#2f5fb0"/>
<path d="M136 630.5 h7 v9 h-7 z" fill="#e8e8f2"/>
<rect x="130" y="636" width="8" height="3.5" fill="#cfd4e6"/>
<!-- chrome -->
<circle cx="176.6" cy="632.3" r="9.7" fill="#db4437"/>
<path d="M176.6 632.3 L168.2 637.2 A9.7 9.7 0 0 0 181.5 640.7 Z" fill="#0f9d58"/>
<path d="M176.6 632.3 L181.5 640.7 A9.7 9.7 0 0 0 185.1 627.5 L176.6 627.5 Z" fill="#f4c20d"/>
<path d="M176.6 632.3 L168.2 637.2 A9.7 9.7 0 0 1 167.5 628.5 Z" fill="#1e9c4a"/>
<circle cx="176.6" cy="632.3" r="4.6" fill="#f4f4f4"/>
<circle cx="176.6" cy="632.3" r="3.6" fill="#4a84e8"/>
<!-- powerpoint -->
<circle cx="219.8" cy="632.5" r="9.3" fill="#cf4a2c"/>
<path d="M219.8 623.2 A9.3 9.3 0 0 1 229.1 632.5 H219.8 Z" fill="#e86a4a"/>
<rect x="207.5" y="627.5" width="9.5" height="9.5" rx="1" fill="#c43e1c"/>
<text x="209.4" y="635.8" font-family="Liberation Sans" font-weight="bold" font-size="8.5" fill="#fff">P</text>
<!-- active app -->
<path d="M253 639 A10.2 10.2 0 1 1 270 637" fill="none" stroke="#f4f4f4" stroke-width="2"/>
<path d="M253.5 638.5 L259 631.5 L262 634.5 L265 631 L270 637.5 Q262 642.5 253.5 638.5 Z" fill="#f4f4f4"/>
<circle cx="258.8" cy="628.3" r="1.3" fill="#f4f4f4"/>
<!-- tray -->
<g fill="none" stroke="#e8e8e8" stroke-width="1.1">
<path d="M887.2 635 L892.6 629.9 L898 635"/>
<path d="M913.5 630.5 h2.5 l3.5 -3 v11 l-3.5 -3 h-2.5 z"/>
<path d="M921.5 630.5 q1.5 2.2 0 4.4 M923.8 628.8 q3 3.9 0 7.8 M926 627.2 q4.2 5.5 0 11"/>
<path d="M944 637.5 A9.5 9.5 0 0 1 953.5 628 M946.8 637.5 A6.7 6.7 0 0 1 953.5 630.8 M949.6 637.5 A3.9 3.9 0 0 1 953.5 633.6"/>
<path d="M983.5 625.5 l2.2 2 l-8.5 9.6 l-2.9 0.9 l0.8 -2.9 z M981.5 627.7 l2.2 2 M985 631.5 q1.5 1.5 -0.5 2.5 h-3" /><path d="M975 637 q-3.5 -0.5 -3 2 q1 1.5 3.5 0" />
<rect x="1004" y="626.3" width="18.5" height="11" rx="0.5"/>
</g>
<circle cx="953" cy="637" r="1.3" fill="#f0f0f0"/>
<path d="M1006.5 629 h13.5 M1006.5 631.5 h13.5 M1008.5 634.3 h9.5" stroke="#e8e8e8" stroke-width="1" stroke-dasharray="1.3 0.7"/>
<path d="M1098 625.4 h14.5 v12 h-10 l-3 3 v-3 h-1.5 z" fill="#f6f6f6"/>
<path d="M1100.5 628.5 h9 M1100.5 631 h9 M1100.5 633.5 h6" stroke="#555" stroke-width="0.9"/>
<circle cx="1111.3" cy="638.7" r="6.3" fill="#2c2c2c" stroke="#9a9a9a" stroke-width="1"/>
<text x="1109" y="642.5" font-family="Liberation Sans" font-size="8.5" fill="#f4f4f4">1</text>
<rect x="1129.3" y="616" width="1" height="31" fill="#6a6a6a"/>
</svg>
<div class="t" style="left:1038.5px;top:620px;font-size:10.4px;letter-spacing:-0.45px;color:#f0f0f0">12:53 PM</div>
<div class="t" style="left:1038.5px;top:636px;font-size:10.4px;letter-spacing:-0.2px;color:#f0f0f0">8/2/2021</div>

</body></html>
